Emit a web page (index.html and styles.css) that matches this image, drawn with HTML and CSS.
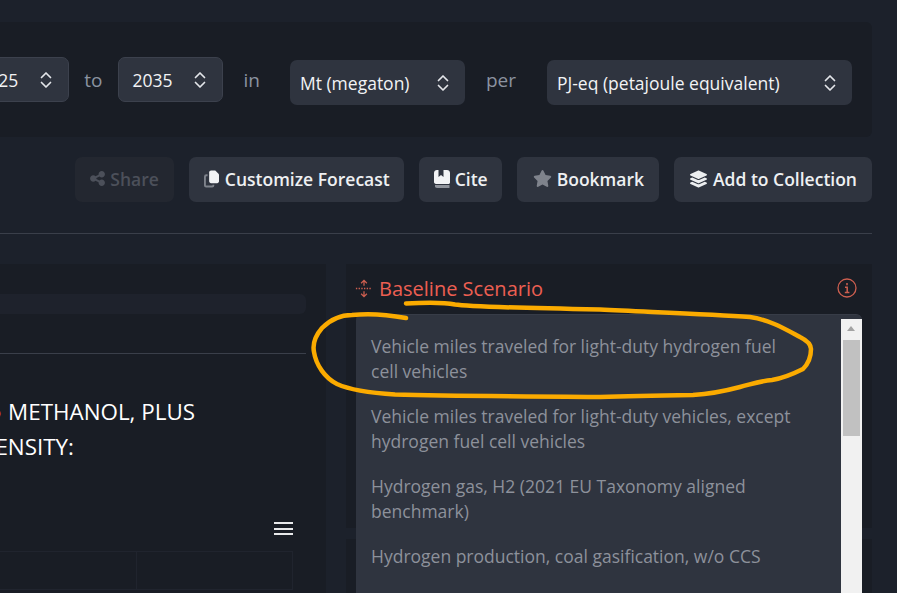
FILE: index.html
```html
<!DOCTYPE html>
<html lang="en">
<head>
<meta charset="utf-8">
<title>Forecast</title>
<link rel="stylesheet" href="styles.css">
</head>
<body>
<svg width="0" height="0" class="defs">
  <symbol id="updown" viewBox="0 0 12 18"><path d="M1.500 6.500 6 2l4.500 4.500M1.500 11.500 6 16l4.500-4.500" fill="none" stroke="currentColor" stroke-width="1.700" stroke-linecap="round" stroke-linejoin="round"/></symbol>
</svg>
<main class="page">
  <section class="filters">
    <div class="select bordered year"><span>2025</span><svg class="chev"><use href="#updown"/></svg></div>
    <span class="label l-to">to</span>
    <div class="select bordered year"><span>2035</span><svg class="chev"><use href="#updown"/></svg></div>
    <span class="label l-in">in</span>
    <div class="select unit mt"><span>Mt (megaton)</span><svg class="chev"><use href="#updown"/></svg></div>
    <span class="label l-per">per</span>
    <div class="select unit pj"><span>PJ-eq (petajoule equivalent)</span><svg class="chev"><use href="#updown"/></svg></div>
  </section>

  <section class="actions">
    <button class="btn disabled"><svg class="ico share" viewBox="0 0 448 512"><path fill="currentColor" d="M352 224c53 0 96-43 96-96s-43-96-96-96s-96 43-96 96c0 4 .2 8 .7 11.900l-94.100 47C145.400 170.200 121.900 160 96 160c-53 0-96 43-96 96s43 96 96 96c25.900 0 49.400-10.200 66.600-26.900l94.100 47c-.5 3.900-.7 7.800-.7 11.900c0 53 43 96 96 96s96-43 96-96s-43-96-96-96c-25.900 0-49.400 10.200-66.600 26.900l-94.100-47c.5-3.900 .7-7.800 .7-11.900s-.2-8-.7-11.900l94.100-47C302.600 213.800 326.100 224 352 224z"/></svg>Share</button>
    <button class="btn customize"><svg class="ico copy" viewBox="0 0 16 18"><path d="M7.500 0h4.500l4 4v7.500c0 1.100-.9 2-2 2H7.500c-1.100 0-2-.9-2-2V2c0-1.100.9-2 2-2z" fill="#f2f3f5"/><path d="M3.800 5H2.500C1.500 5 1 5.800 1 6.500v9.300c0 .7.600 1.200 1.300 1.200h6.400c.8 0 1.300-.6 1.300-1.200v-.8" fill="none" stroke="#7f838c" stroke-width="2"/></svg>Customize Forecast</button>
    <button class="btn cite"><svg class="ico book" viewBox="0 0 16 18"><path d="M3 0h1.500v7l2.500-2 2.500 2V0H13c1.600 0 3 1.300 3 3v9.500c0 .8-.7 1.500-1.500 1.500H3c-1.700 0-3-.4-3-2V3c0-1.700 1.300-3 3-3z" fill="#f2f3f5"/><path d="M1 15h14.500v3H3c-1.200 0-2-.8-2-1.500z" fill="#8f939b"/></svg>Cite</button>
    <button class="btn bookmark"><svg class="ico star" viewBox="0 0 576 512"><path fill="#7f838c" d="M316.900 18C311.600 7 300.400 0 288.100 0s-23.400 7-28.800 18L195 150.300 51.400 171.500c-12 1.800-22 10.200-25.700 21.700s-.7 24.200 7.900 32.700L137.800 329 113.200 474.700c-2 12 3 24.200 12.900 31.300s23 8 33.800 2.300l128.300-68.500 128.300 68.500c10.800 5.700 23.900 4.900 33.800-2.300s14.900-19.300 12.900-31.300L438.500 329 542.700 225.900c8.600-8.500 11.700-21.200 7.900-32.700s-13.700-19.900-25.700-21.700L381.200 150.300 316.900 18z"/></svg>Bookmark</button>
    <button class="btn"><svg class="ico layers" viewBox="0 0 576 512"><path fill="#eceef0" d="M264.500 5.200c14.900-6.900 32.100-6.900 47 0l218.600 101c8.500 3.900 13.900 12.400 13.900 21.800s-5.400 17.900-13.900 21.800l-218.600 101c-14.900 6.900-32.100 6.900-47 0L45.900 149.800C37.400 145.800 32 137.300 32 128s5.400-17.900 13.900-21.800L264.500 5.200zM476.900 209.600l53.200 24.600c8.500 3.900 13.900 12.400 13.900 21.800s-5.400 17.900-13.900 21.800l-218.600 101c-14.900 6.900-32.100 6.900-47 0L45.900 277.800C37.400 273.800 32 265.300 32 256s5.400-17.900 13.900-21.800l53.200-24.600 152 70.200c23.400 10.800 50.400 10.800 73.800 0l152-70.200zm-152 198.200l152-70.200 53.200 24.600c8.500 3.900 13.900 12.400 13.900 21.800s-5.400 17.900-13.900 21.800l-218.600 101c-14.900 6.900-32.100 6.900-47 0L45.900 405.800C37.400 401.800 32 393.300 32 384s5.400-17.900 13.900-21.800l53.200-24.600 152 70.200c23.400 10.800 50.400 10.800 73.800 0z"/></svg>Add to Collection</button>
  </section>

  <hr class="rule">

  <section class="content">
    <div class="chart-panel">
      <div class="searchbar"></div>
      <hr class="panel-rule">
      <h2 class="title">
        <span class="title-line first"><span class="dot">●</span> METHANOL, PLUS</span>
        <span class="title-line second">INTENSITY:</span>
      </h2>
      <div class="menu-row"><span class="burger"><i></i><i></i><i></i></span></div>
      <div class="grid"><div></div><div></div></div>
    </div>

    <div class="side">
      <div class="card">
        <header class="card-head">
          <svg class="move" viewBox="0 0 20 20"><path d="M10 1v6M10 13v6M6.800 4.200 10 1l3.200 3.200M6.800 15.800 10 19l3.200-3.200" fill="none" stroke="currentColor" stroke-width="1.400"/><path d="M1 10h18" fill="none" stroke="currentColor" stroke-width="1.500" stroke-dasharray="1.500 1.500"/></svg>
          <span class="card-title">Baseline Scenario</span>
          <svg class="info" viewBox="0 0 20 20"><circle cx="10" cy="10" r="9" fill="none" stroke="currentColor" stroke-width="1.300"/><path d="M10 5v2.200M8 9.300h2.200v5M7.800 14.500h4.600" fill="none" stroke="currentColor" stroke-width="1.500"/></svg>
        </header>
        <div class="list">
          <ul class="items">
            <li>Vehicle miles traveled for light-duty hydrogen fuel cell vehicles</li>
            <li>Vehicle miles traveled for light-duty vehicles, except hydrogen fuel cell vehicles</li>
            <li>Hydrogen gas, H2 (2021 EU Taxonomy aligned benchmark)</li>
            <li>Hydrogen production, coal gasification, w/o CCS</li>
          </ul>
          <div class="scrollbar"><div class="sb-up"></div><div class="sb-thumb"></div></div>
        </div>
      </div>
      <div class="card lower"></div>
    </div>
  </section>
</main>

<svg class="scribble" viewBox="0 0 897 593" width="897" height="593">
  <path d="M406 303.500C425 302.500 445 302.500 455 304.500C470 307 520 308 600 309.500C650 312 710 314 750 317C770 320 785 329 800 337C808 341 811 345 811 349C811 356 809 363 803 369C795 373 785 378 772 380C760 381 752 384 740 387C725 391 710 394 693 395C660 395.500 630 396 600 397C530 396.500 450 396 395 394.500C370 393 350 390 337 384C325 378 316 365 314 352C312 342 316 335 322 328C330 320 340 315 352 315C370 313 390 315 406 318" fill="none" stroke="#fbab00" stroke-width="4.500" stroke-linecap="round" stroke-linejoin="round"/>
</svg>
</body>
</html>
```

FILE: styles.css
```css
* { box-sizing: border-box; }

html, body {
  margin: 0;
  height: 593px;
  overflow: hidden;
  background: #1c212b;
}

body {
  position: relative;
  font-family: "Open Sans", "Noto Sans", sans-serif;
  color: #f2f3f5;
}

.defs { position: absolute; }

.page {
  width: 897px;
  height: 593px;
  padding: 22px 25px 0 0;
  display: flex;
  flex-direction: column;
  align-items: flex-end;
}

.filters {
  flex: none;
  width: 1000px;
  height: 115px;
  padding: 35px 20px 0 0;
  display: flex;
  justify-content: flex-end;
  align-items: flex-start;
  background: #191d25;
  border-radius: 6px;
}

.select {
  flex: none;
  height: 45px;
  display: flex;
  align-items: center;
  justify-content: space-between;
  background: #2f343f;
  border-radius: 7px;
  font-size: 17.500px;
  color: #f2f3f5;
}

.bordered { border: 1px solid #3c414d; }
.year { width: 105px; padding: 0 16px 0 13px; }
.unit { margin-top: 3px; padding: 0 16px 0 10px; }
.mt { width: 175px; }
.pj { width: 305px; padding-right: 16px; }

.chev { width: 12px; height: 18px; color: #e4e6ea; }

.label {
  flex: none;
  font-size: 19px;
  line-height: 46px;
  color: #8b93a0;
}
.l-to { margin: 0 16px 0 15px; }
.l-in { margin: 0 30px 0 20px; }
.l-per { margin: 0 31px 0 21px; }

.actions {
  flex: none;
  margin-top: 20px;
  display: flex;
  gap: 15px;
}

.btn {
  height: 45px;
  padding: 0 15px 2px;
  display: flex;
  align-items: center;
  gap: 5px;
  border: 0;
  border-radius: 7px;
  background: #2f343f;
  color: #eef0f2;
  font: 600 17.500px "Open Sans", sans-serif;
}

.btn.disabled {
  background: #232730;
  color: #4c505a;
}

.btn.customize { gap: 6px; padding-right: 14px; }
.btn.cite { padding-right: 14px; }
.btn.bookmark { padding-left: 16px; }

.ico { flex: none; height: 16px; width: 16px; }
.ico.share { width: 15px; height: 17px; }
.ico.star { width: 19px; height: 17px; }
.ico.layers { width: 19px; height: 18px; }
.ico.book { height: 18px; }
.ico.copy { width: 15px; height: 18px; }

.rule {
  flex: none;
  width: 1000px;
  height: 1px;
  margin: 31px 0 0;
  border: 0;
  background: #3a3f4a;
}

.content {
  flex: none;
  margin-top: 30px;
  height: 329px;
  display: flex;
  gap: 20px;
}

.chart-panel {
  width: 326px;
  height: 329px;
  padding: 30px 20px 0 0;
  background: #191d25;
}

.searchbar {
  height: 20px;
  background: #1e222c;
  border-radius: 0 6px 6px 0;
}

.panel-rule {
  height: 1px;
  margin: 39px 0 0;
  border: 0;
  background: #3a3f4a;
}

.title {
  margin: 40px 0 0;
  font-size: 22.400px;
  font-weight: 400;
  line-height: 35px;
  color: #fff;
}

.title-line {
  display: flex;
  justify-content: flex-end;
  white-space: pre;
}
.title-line.first { width: 195px; }
.title-line.second { width: 74px; }
.dot { color: #e0531f; }

.menu-row {
  display: flex;
  justify-content: flex-end;
  margin-top: 58px;
  padding-right: 13px;
}

.burger {
  display: flex;
  flex-direction: column;
  gap: 3.500px;
  width: 19px;
}
.burger i {
  display: block;
  height: 2px;
  background: #e8e9eb;
}

.grid {
  width: 293px;
  height: 39px;
  margin-top: 16px;
  display: grid;
  grid-template-columns: 136px 1fr;
  border: 1px solid #20242e;
  border-left: 0;
}
.grid div + div { border-left: 1px solid #20242e; }

.side {
  width: 526px;
  display: flex;
  flex-direction: column;
  gap: 11px;
}

.card {
  flex: none;
  height: 264px;
  background: #191d25;
  padding-left: 10px;
}
.card.lower { height: 60px; }

.card-head {
  height: 50px;
  margin-left: -1px;
  display: flex;
  align-items: center;
  padding: 0 15px 2px 0;
  color: #ec5f52;
}

.move { width: 18px; height: 19px; color: #cd5f50; flex: none; }
.info { width: 20px; height: 20px; color: #cd5f50; flex: none; margin-left: auto; }

.card-title {
  margin-left: 6px;
  font-size: 20px;
}

.list {
  position: relative;
  z-index: 1;
  width: 506px;
  height: 300px;
  display: flex;
  justify-content: space-between;
  background: #2f343f;
  border-top: 1px solid #373c47;
  border-radius: 6px 6px 0 0;
}

.items {
  width: 445px;
  margin: 0;
  padding: 19px 0 0 15px;
  list-style: none;
  font-size: 17.500px;
  line-height: 25px;
  color: #8d919b;
}
.items li { margin-bottom: 20px; }

.scrollbar {
  flex: none;
  width: 21px;
  margin-top: 4px;
  background: #f1f1f1;
}
.sb-up {
  height: 21px;
  position: relative;
}
.sb-up::after {
  content: "";
  position: absolute;
  left: 6px;
  top: 7px;
  border-left: 4.500px solid transparent;
  border-right: 4.500px solid transparent;
  border-bottom: 5px solid #a3a3a3;
}
.sb-thumb {
  width: 17px;
  height: 96px;
  margin-left: 2px;
  background: #c1c1c1;
}

.scribble {
  position: absolute;
  left: 0;
  top: 0;
  z-index: 5;
  pointer-events: none;
}
```
